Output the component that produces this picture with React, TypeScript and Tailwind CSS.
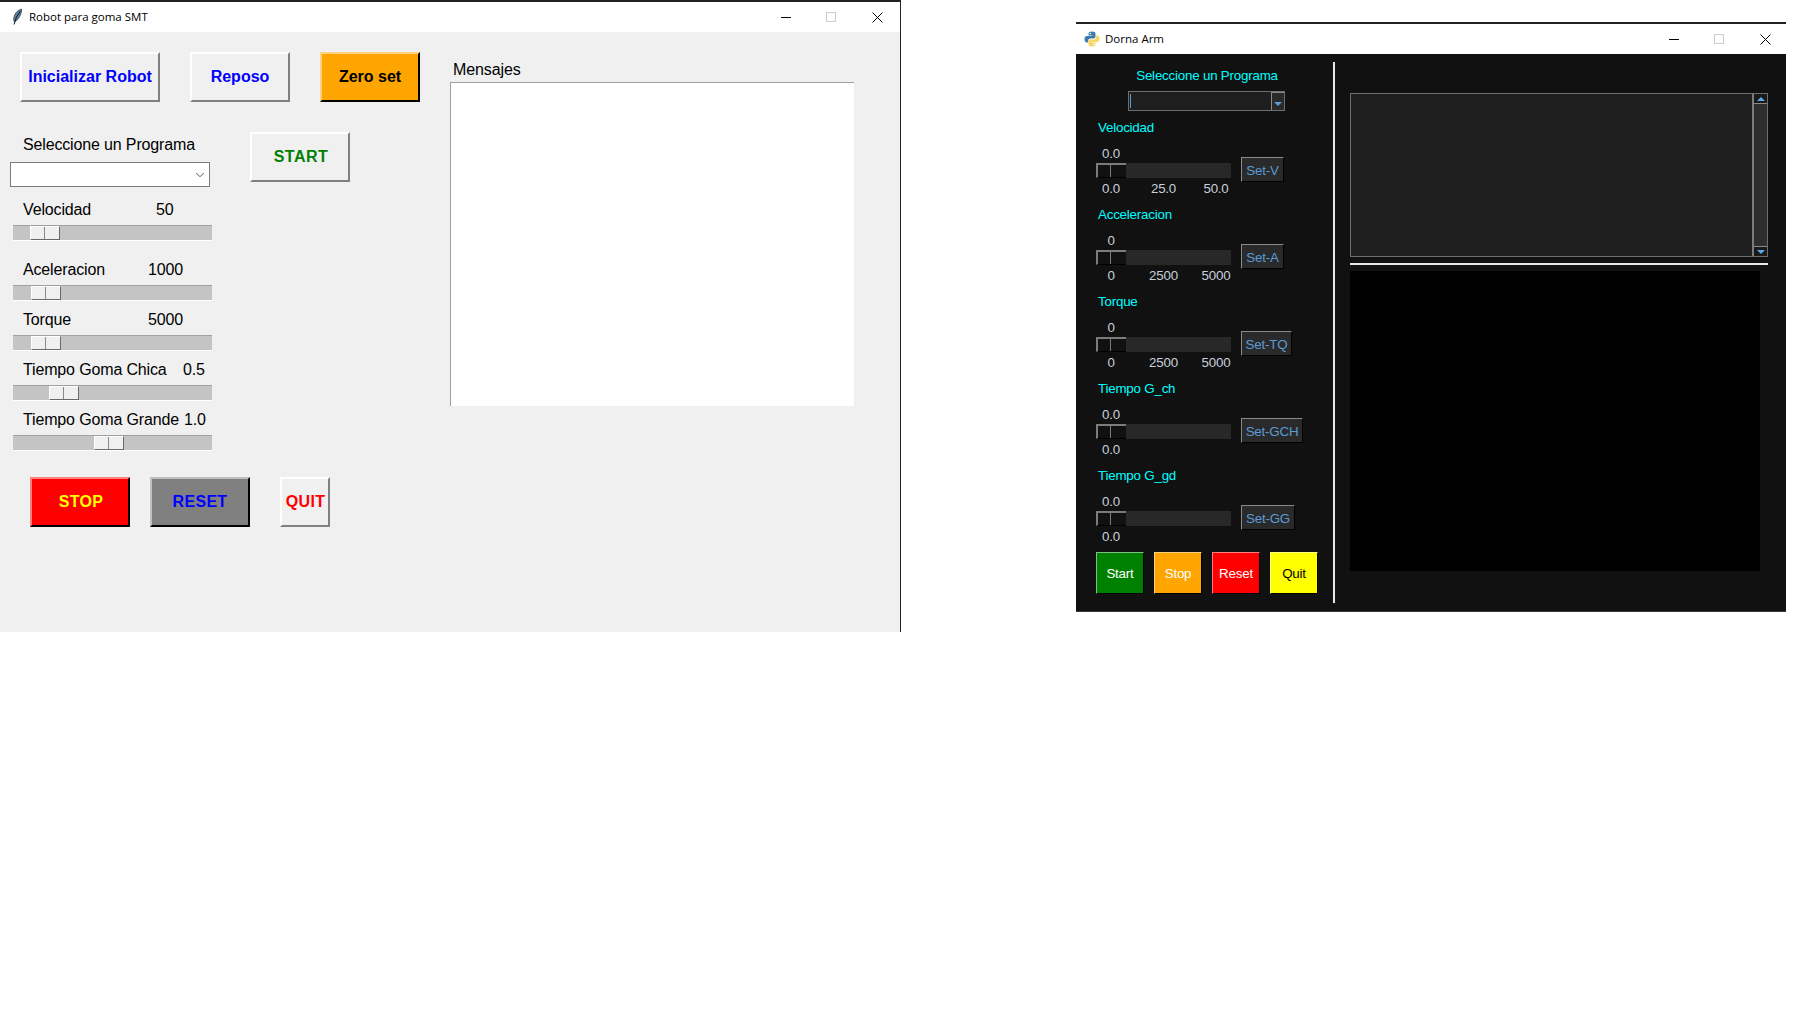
import React from 'react';
import { ChevronDown } from 'lucide-react';

const arial = 'font-["Liberation_Sans",Arial,sans-serif]';

interface SliderRow {
  label: string;
  value: string;
  valueWidth: string;
  rowTop: string;
  thumb: number;
}

const leftSliders: SliderRow[] = [
  { label: 'Velocidad', value: '50', valueWidth: 'w-[133px]', rowTop: 'mt-[12px]', thumb: 17 },
  { label: 'Aceleracion', value: '1000', valueWidth: 'w-[125px]', rowTop: 'mt-[18px]', thumb: 18 },
  { label: 'Torque', value: '5000', valueWidth: 'w-[125px]', rowTop: 'mt-[8px]', thumb: 18 },
  { label: 'Tiempo Goma Chica', value: '0.5', valueWidth: 'w-[160px]', rowTop: 'mt-[8px]', thumb: 36 },
  { label: 'Tiempo Goma Grande', value: '1.0', valueWidth: 'w-[161px]', rowTop: 'mt-[8px]', thumb: 81 },
];

const darkGroups = [
  { label: 'Velocidad', value: '0.0', ticks: ['0.0', '25.0', '50.0'], set: 'Set-V', setWidth: 'w-[43px]' },
  { label: 'Acceleracion', value: '0', ticks: ['0', '2500', '5000'], set: 'Set-A', setWidth: 'w-[43px]' },
  { label: 'Torque', value: '0', ticks: ['0', '2500', '5000'], set: 'Set-TQ', setWidth: 'w-[51px]' },
  { label: 'Tiempo G_ch', value: '0.0', ticks: ['0.0'], set: 'Set-GCH', setWidth: 'w-[62px]' },
  { label: 'Tiempo G_gd', value: '0.0', ticks: ['0.0'], set: 'Set-GG', setWidth: 'w-[54px]' },
];

const Feather = () => (
  <svg width="14" height="18" viewBox="0 0 14 18" className="ml-[10px] shrink-0">
    <path d="M11.5 1C7.5 2 4.5 5.5 3.8 9.5 3.4 11.5 3.8 13 4.5 14 7.5 12.5 10 9 11 5.5 11.5 3.8 11.8 2.2 11.5 1Z" fill="#5f7f98" stroke="#1c2f40" strokeWidth=".6" />
    <path d="M10.5 3 6.5 9 4 16.5" fill="none" stroke="#0b1a26" strokeWidth="1" />
  </svg>
);

const PythonLogo = () => (
  <svg width="16" height="16" viewBox="0 0 16 16" className="ml-[8px] shrink-0">
    <path d="M8 .5C5.5.5 4.6 1.4 4.6 2.8V4.4H8.3V5H3C1.4 5 .5 6.2.5 8.2S1.4 11.4 2.8 11.4H4.2V9.6C4.2 8.2 5.3 7.4 6.5 7.4H9.7C10.8 7.4 11.5 6.6 11.5 5.6V2.8C11.5 1.4 10.3.5 8 .5Z" fill="#3f7cac" />
    <path d="M8 15.5C10.5 15.5 11.4 14.6 11.4 13.2V11.6H7.7V11H13C14.6 11 15.5 9.8 15.5 7.8S14.6 4.6 13.2 4.6H11.8V6.4C11.8 7.8 10.7 8.6 9.5 8.6H6.3C5.2 8.6 4.5 9.4 4.5 10.4V13.2C4.5 14.6 5.7 15.5 8 15.5Z" fill="#f7d765" />
    <circle cx="6.4" cy="2.5" r=".7" fill="#fff" />
    <circle cx="9.6" cy="13.5" r=".7" fill="#fff" />
  </svg>
);

const WindowControls = ({ className = '' }: { className?: string }) => (
  <div className={`flex items-center h-full ${className}`}>
    <div className="w-[45px] pl-[17px]">
      <div className="w-[10px] h-px bg-black" />
    </div>
    <div className="w-[45px] pl-[17px]">
      <div className="w-[10px] h-[10px] border border-[#cccccc]" />
    </div>
    <div className="w-[46px] pl-[18px]">
      <svg width="11" height="11" viewBox="0 0 11 11" className="block">
        <path d="M.5.5l10 10M10.5.5l-10 10" stroke="#000" strokeWidth="1" fill="none" />
      </svg>
    </div>
  </div>
);

const LeftSlider = ({ thumb }: { thumb: number }) => (
  <div className="mt-[6px] ml-[13px] w-[199px] h-[16px] bg-[#c4c4c4] border-t border-t-[#a0a0a0] border-b border-b-white">
    <div
      className="w-[30px] h-[14px] flex bg-[#f0f0f0] border-t border-l border-t-white border-l-white border-r border-b border-r-[#696969] border-b-[#696969]"
      style={{ marginLeft: thumb }}
    >
      <div className="w-[14px] h-full border-r border-r-[#8a8a8a]" />
    </div>
  </div>
);

const DarkSlider = () => (
  <div className="w-[135px] h-[15px] bg-[#282828]">
    <div className="w-[30px] h-[15px] flex bg-[#111111] border-t-2 border-l-2 border-t-[#7c7c7c] border-l-[#7c7c7c] border-b border-b-black">
      <div className="w-[13px] h-full border-r border-r-[#7c7c7c]" />
    </div>
  </div>
);

const RobotWindow = () => (
  <div className={`w-[901px] h-[632px] shrink-0 flex flex-col border-r border-r-[#222222] ${arial}`}>
    <div className="h-[2px] bg-[#222222]" />
    <div className="h-[30px] bg-white flex items-center justify-between">
      <div className="flex items-center gap-[5px]">
        <Feather />
        <span className='text-[11.5px] text-black font-["Open_Sans",sans-serif]'>Robot para goma SMT</span>
      </div>
      <WindowControls />
    </div>

    <div className="flex-1 bg-[#f0f0f0] flex text-black">
      <div className="w-[450px] shrink-0 flex flex-col">
        <div className="mt-[20px] pl-[20px] flex text-[16px] font-bold">
          <button className="w-[140px] h-[50px] bg-[#f0f0f0] text-[#0000ff] border-2 border-t-white border-l-white border-r-[#808080] border-b-[#808080]">
            Inicializar Robot
          </button>
          <button className="ml-[30px] w-[100px] h-[50px] bg-[#f0f0f0] text-[#0000ff] border-2 border-t-white border-l-white border-r-[#808080] border-b-[#808080]">
            Reposo
          </button>
          <button className="ml-[30px] w-[100px] h-[50px] bg-[#ffa500] text-black border-2 border-t-[#ffd280] border-l-[#ffd280] border-r-black border-b-black">
            Zero set
          </button>
        </div>

        <div className="mt-[30px] flex items-start">
          <div className="w-[250px] shrink-0 flex flex-col text-[16px] tracking-[-0.15px]">
            <div className="h-[24px] pl-[23px] leading-[26px]">Seleccione un Programa</div>
            <div className="mt-[6px] ml-[10px] w-[200px] h-[25px] bg-white border border-[#7a7a7a] flex items-center justify-end pr-[2px]">
              <ChevronDown className="w-[14px] h-[14px] text-[#444444]" strokeWidth={1.5} />
            </div>
            {leftSliders.map((row) => (
              <div key={row.label}>
                <div className={`${row.rowTop} h-[20px] pl-[23px] leading-[22px] flex whitespace-nowrap`}>
                  <span className={row.valueWidth}>{row.label}</span>
                  <span>{row.value}</span>
                </div>
                <LeftSlider thumb={row.thumb} />
              </div>
            ))}
          </div>
          <button className="w-[100px] h-[50px] pl-[2px] bg-[#f0f0f0] text-[#008000] text-[16px] font-bold tracking-[0.5px] border-2 border-t-white border-l-white border-r-[#808080] border-b-[#808080]">
            START
          </button>
        </div>

        <div className="mt-[26px] pl-[30px] flex text-[16px] font-bold tracking-[0.3px]">
          <button className="w-[100px] h-[50px] pl-[2px] bg-[#ff0000] text-[#ffff00] border-2 border-t-[#ff8080] border-l-[#ff8080] border-r-black border-b-black">
            STOP
          </button>
          <button className="ml-[20px] w-[100px] h-[50px] bg-[#808080] text-[#0000ff] border-2 border-t-[#c0c0c0] border-l-[#c0c0c0] border-r-black border-b-black">
            RESET
          </button>
          <button className="ml-[30px] w-[50px] h-[50px] pl-[1px] bg-[#f0f0f0] text-[#ff0000] border-2 border-t-white border-l-white border-r-[#808080] border-b-[#808080]">
            QUIT
          </button>
        </div>
      </div>

      <div className="flex flex-col">
        <div className="mt-[26px] h-[24px] pl-[3px] text-[16px] leading-[24px] tracking-[-0.1px]">Mensajes</div>
        <div className="w-[404px] h-[324px] bg-white border-t border-l border-t-[#a0a0a0] border-l-[#a0a0a0]" />
      </div>
    </div>
  </div>
);

const DornaWindow = () => (
  <div className={`ml-[175px] mt-[22px] w-[710px] h-[590px] shrink-0 flex flex-col overflow-hidden ${arial}`}>
    <div className="h-[2px] bg-[#222222]" />
    <div className="h-[30px] bg-white flex items-center justify-between">
      <div className="flex items-center gap-[5px]">
        <PythonLogo />
        <span className='text-[11.5px] text-black font-["Open_Sans",sans-serif]'>Dorna Arm</span>
      </div>
      <WindowControls className="-mr-[2px]" />
    </div>

    <div className="flex-1 bg-[#111111] flex border-b border-b-[#3a3a3a] text-[13.33px] tracking-[-0.2px]">
      <div className="w-[257px] shrink-0 pl-[20px] flex flex-col">
        <div className="mt-[13px] h-[18px] leading-[18px] w-[222px] text-center text-[#00ffff]">Seleccione un Programa</div>
        <div className="mt-[6px] ml-[32px] w-[157px] h-[20px] bg-[#1e1e1e] border border-[#6e6e6e] flex items-center justify-between">
          <div className="ml-[1px] w-px h-[14px] bg-[#5b9bd5]" />
          <div className="w-[13px] h-[18px] bg-[#2a2a2a] border-l border-t border-l-[#8a8a8a] border-t-[#8a8a8a] flex items-end justify-center pb-[4px]">
            <div className="w-0 h-0 border-x-[4px] border-x-transparent border-t-[4px] border-t-[#5b9bd5]" />
          </div>
        </div>

        <div className="mt-[7px] flex flex-col">
          {darkGroups.map((g) => (
            <div key={g.label} className="h-[87px] flex flex-col">
              <div className="h-[18px] leading-[20px] pl-[2px] text-[#00ffff]">{g.label}</div>
              <div className="mt-[9px] flex items-start">
                <div className="flex flex-col w-[135px]">
                  <div className="h-[16px] leading-[18px] w-[30px] text-center text-[#c8d0dc]">{g.value}</div>
                  <div className="mt-[2px]">
                    <DarkSlider />
                  </div>
                  <div className="mt-[2px] h-[16px] leading-[18px] flex justify-between text-[#c8d0dc]">
                    {g.ticks.map((t) => (
                      <span key={t} className="w-[30px] text-center whitespace-nowrap">{t}</span>
                    ))}
                  </div>
                </div>
                <button className={`ml-[10px] mt-[12px] h-[25px] pt-[2px] ${g.setWidth} whitespace-nowrap bg-[#2a2a2a] text-[#5b9bd5] border border-t-[#8a8a8a] border-l-[#8a8a8a] border-r-black border-b-black`}>
                  {g.set}
                </button>
              </div>
            </div>
          ))}
        </div>

        <div className="-mt-px flex gap-[10px]">
          <button className="w-[48px] h-[42px] pt-[1px] bg-[#008000] text-white border border-t-[#80c080] border-l-[#80c080] border-r-black border-b-black">Start</button>
          <button className="w-[48px] h-[42px] pt-[1px] bg-[#ffa500] text-white border border-t-[#ffd280] border-l-[#ffd280] border-r-black border-b-black">Stop</button>
          <button className="w-[48px] h-[42px] pt-[1px] bg-[#ff0000] text-white border border-t-[#ff8080] border-l-[#ff8080] border-r-black border-b-black">Reset</button>
          <button className="w-[48px] h-[42px] pt-[1px] bg-[#ffff00] text-black border border-t-[#ffff80] border-l-[#ffff80] border-r-black border-b-black">Quit</button>
        </div>
      </div>

      <div className="mt-[8px] w-[2px] h-[541px] bg-[#e8e8e8] shrink-0" />

      <div className="ml-[15px] flex flex-col">
        <div className="mt-[39px] w-[418px] h-[164px] bg-[#1e1e1e] border border-[#6e6e6e] flex justify-end">
          <div className="w-[15px] h-full bg-[#2e2e2e] border-l-2 border-l-[#7c7c7c] flex flex-col justify-between">
            <div className="h-[10px] bg-[#1a1a1a] border-b border-b-[#8a8a8a] flex items-center justify-center">
              <div className="w-0 h-0 border-x-[4px] border-x-transparent border-b-[4px] border-b-[#5aa9f0]" />
            </div>
            <div className="h-[10px] bg-[#1a1a1a] border-t border-t-[#8a8a8a] flex items-center justify-center">
              <div className="w-0 h-0 border-x-[4px] border-x-transparent border-t-[4px] border-t-[#5aa9f0]" />
            </div>
          </div>
        </div>
        <div className="mt-[6px] w-[418px] h-[2px] bg-[#e8e8e8]" />
        <div className="mt-[6px] w-[410px] h-[300px] bg-black" />
      </div>
    </div>
  </div>
);

export default function App() {
  return (
    <div className="w-[1820px] h-[1030px] bg-white flex items-start overflow-hidden">
      <RobotWindow />
      <DornaWindow />
    </div>
  );
}
